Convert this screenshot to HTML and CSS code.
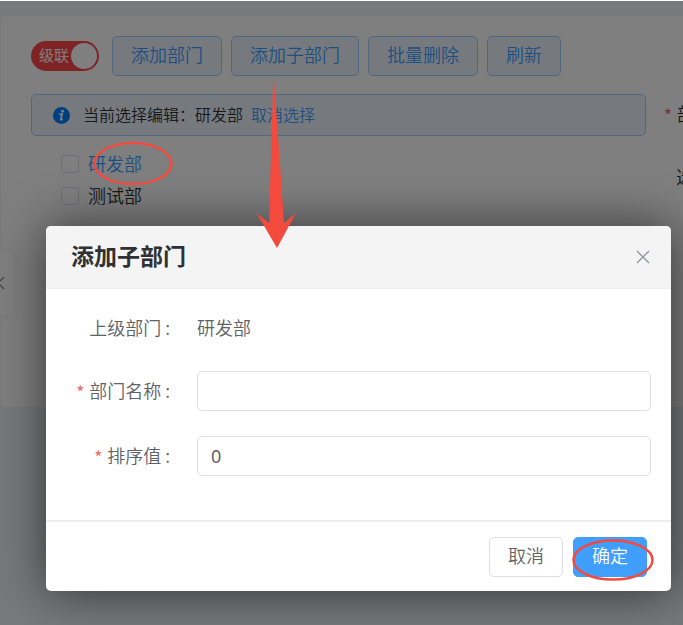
FILE: index.html
```
<!DOCTYPE html>
<html lang="zh-CN">
<head>
  <meta charset="UTF-8">
  <meta name="viewport" content="width=device-width, initial-scale=1.0">
  <title>部门管理</title>
  <link rel="stylesheet" href="styles.css">
</head>
<body>
  <div class="page">
    <div class="panel">
      <div class="left">
        <div class="toolbar">
          <label class="switch"><span>级联</span><input type="checkbox" role="switch" checked></label>
          <div class="buttons">
            <button type="button" class="btn plain">添加部门</button>
            <button type="button" class="btn plain">添加子部门</button>
            <button type="button" class="btn plain">批量删除</button>
            <button type="button" class="btn plain">刷新</button>
          </div>
        </div>
        <div class="alert">
          <svg class="info-icon" viewBox="0 0 16 16" width="17" height="17">
            <circle cx="8" cy="8" r="8" fill="#0080ff"/>
            <circle cx="9" cy="4" r="1.3" fill="#fff"/>
            <path d="M6 6.800h2.600L7.400 11.600c-.1.6.4.6 1.600-.4" fill="none" stroke="#fff" stroke-width="1.7"/>
          </svg>
          <span>当前选择编辑：研发部</span>
          <a href="#">取消选择</a>
        </div>
        <ul class="tree">
          <li><label class="active"><input type="checkbox"><span>研发部</span></label></li>
          <li><label><input type="checkbox"><span>测试部</span></label></li>
        </ul>
      </div>
      <div class="right">
        <p class="required">部</p>
        <p>选</p>
      </div>
    </div>
  </div>

  <button type="button" class="collapse" aria-label="收起">
    <svg viewBox="0 0 8 16" width="8" height="16"><path d="M7 2L1 8l6 6" fill="none" stroke="#909399" stroke-width="1.5"/></svg>
  </button>

  <div class="mask">
    <form class="dialog">
      <div class="dialog-header">
        <h2>添加子部门</h2>
        <button type="button" class="close" aria-label="关闭">
          <svg viewBox="0 0 14 14" width="14" height="14"><path d="M1 1l12 12M13 1L1 13" fill="none" stroke="#909399" stroke-width="1.3"/></svg>
        </button>
      </div>
      <div class="dialog-body">
        <div class="form-item">
          <span class="form-label">上级部门 :</span>
          <span class="form-text">研发部</span>
        </div>
        <div class="form-item">
          <label class="form-label required" for="name">部门名称 :</label>
          <input type="text" id="name">
        </div>
        <div class="form-item">
          <label class="form-label required" for="sort">排序值 :</label>
          <input type="text" id="sort" value="0">
        </div>
      </div>
      <div class="dialog-footer">
        <button type="button" class="btn">取消</button>
        <button type="submit" class="btn primary">确定</button>
      </div>
    </form>
  </div>

  <!-- guide marks: selected node, arrow to the dialog, confirm button -->
  <svg class="marks" width="683" height="625">
    <ellipse cx="133" cy="163.5" rx="38.5" ry="20.5"/>
    <path d="M273.5 72L284 223l12-10-19 35-20.500-35 12.500 10z"/>
    <ellipse cx="613" cy="560" rx="39.5" ry="19.500"/>
  </svg>
</body>
</html>
```

FILE: styles.css
```
:root{
  --primary:#409eff;
  --text:#606266;
  --border:#dcdfe6;
  --red:#f44a3e;
}
*{
  padding:0;
  margin:0;
  box-sizing:border-box;
}
body{
  position:relative;
  min-height:100vh;
  overflow:hidden;
  border-top:1px solid #fff;
  background-color:#f0f3f6;
  font-family:"Noto Sans CJK SC",sans-serif;
  font-size:18px;
  font-weight:350;
  line-height:26px;
  color:var(--text);
}
button,input{
  font:inherit;
  color:inherit;
}
a{
  color:var(--primary);
  text-decoration:none;
}
.page{
  padding:15px 0 0 1px;
}
.panel{
  display:flex;
  gap:18px;
  min-height:391px;
  padding:20px 0 20px 30px;
  border-radius:5px 0 0 5px;
  background-color:#fff;
}
.left{
  flex:1;
}
.toolbar{
  display:flex;
  align-items:center;
  gap:13px;
}
.buttons{
  display:flex;
  gap:9px;
}
.switch{
  display:flex;
  align-items:center;
  gap:2px;
  height:30px;
  padding:0 2px 0 8px;
  border-radius:15px;
  background-color:#ff4949;
  color:#fff;
  font-size:15px;
  font-weight:400;
}
.switch span{
  padding-bottom:2px;
}
.switch input{
  appearance:none;
  width:26px;
  height:26px;
  border-radius:50%;
  background-color:#fff;
}
.btn{
  height:40px;
  padding:0 18px 4px;
  border:1px solid var(--border);
  border-radius:5px;
  background-color:#fff;
  cursor:pointer;
}
.btn.plain{
  border-color:#a0cfff;
  background-color:#ecf5ff;
  color:var(--primary);
}
.btn.primary{
  border-color:var(--primary);
  background-color:var(--primary);
  color:#fff;
}
.alert{
  display:flex;
  align-items:center;
  height:42px;
  margin-top:18px;
  padding:0 21px;
  border:1px solid #a0cfff;
  border-radius:5px;
  background-color:#ecf5ff;
  font-size:16px;
  color:#303133;
}
.alert span,.alert a{
  padding-bottom:3px;
}
.info-icon{
  margin-right:13px;
}
.alert a{
  margin-left:8px;
}
.tree{
  margin-top:12px;
  padding-left:30px;
  list-style:none;
}
.tree label{
  display:flex;
  align-items:center;
  gap:9px;
  height:32px;
  color:#303133;
}
.tree span{
  padding-bottom:3px;
}
.tree .active{
  color:var(--primary);
}
.tree input{
  appearance:none;
  width:18px;
  height:18px;
  border:1px solid var(--border);
  border-radius:3px;
  background-color:#fff;
}
.right{
  display:flex;
  flex-direction:column;
  gap:36px;
  width:19px;
  padding-top:64px;
  overflow:hidden;
  color:#303133;
}
.right p{
  padding-left:12px;
  white-space:nowrap;
}
.right .required{
  padding-left:0;
}
.required::before{
  content:"*";
  margin-right:5px;
  color:#f56c6c;
  font-size:16px;
  font-weight:500;
}
.collapse{
  position:absolute;
  left:0;
  top:250px;
  display:flex;
  align-items:center;
  width:14px;
  height:64px;
  border:0;
  border-radius:0 6px 6px 0;
  background-color:#fff;
  box-shadow:0 0 8px rgba(0,0,0,.1);
}
.collapse svg{
  margin-left:-3px;
}
.mask{
  position:absolute;
  inset:0;
  padding:225px 12px 33px 46px;
  background-color:rgba(0,0,0,.5);
}
.dialog{
  border-radius:5px;
  background-color:#fff;
  box-shadow:1px 1px 50px rgba(0,0,0,.6);
}
.dialog-header{
  display:flex;
  align-items:center;
  justify-content:space-between;
  height:63px;
  padding:0 21px 0 25px;
  border-bottom:1px solid #eee;
  border-radius:5px 5px 0 0;
  background-color:#f4f4f4;
}
.dialog-header h2{
  padding-bottom:4px;
  font-size:23px;
  font-weight:700;
  color:#303133;
}
.close{
  display:flex;
  border:0;
  background:none;
  cursor:pointer;
}
.dialog-body{
  display:flex;
  flex-direction:column;
  gap:25px;
  padding:20px 20px 44px;
}
.form-item{
  display:flex;
  align-items:center;
  gap:27px;
  min-height:37px;
}
.form-label{
  width:104px;
  padding-bottom:2px;
  text-align:right;
  white-space:nowrap;
}
.form-text{
  padding-bottom:2px;
}
.form-item input{
  flex:1;
  min-width:0;
  height:40px;
  padding:0 13px;
  border:1px solid var(--border);
  border-radius:5px;
  outline:none;
  font-family:"Noto Sans",sans-serif;
  font-weight:400;
}
.dialog-footer{
  display:flex;
  justify-content:flex-end;
  gap:10px;
  padding:15px 24px 14px;
  border-top:2px solid #eee;
}
.marks{
  position:absolute;
  left:0;
  top:-1px;
  pointer-events:none;
}
.marks ellipse{
  fill:none;
  stroke:var(--red);
  stroke-width:2.5;
}
.marks path{
  fill:var(--red);
}
```
